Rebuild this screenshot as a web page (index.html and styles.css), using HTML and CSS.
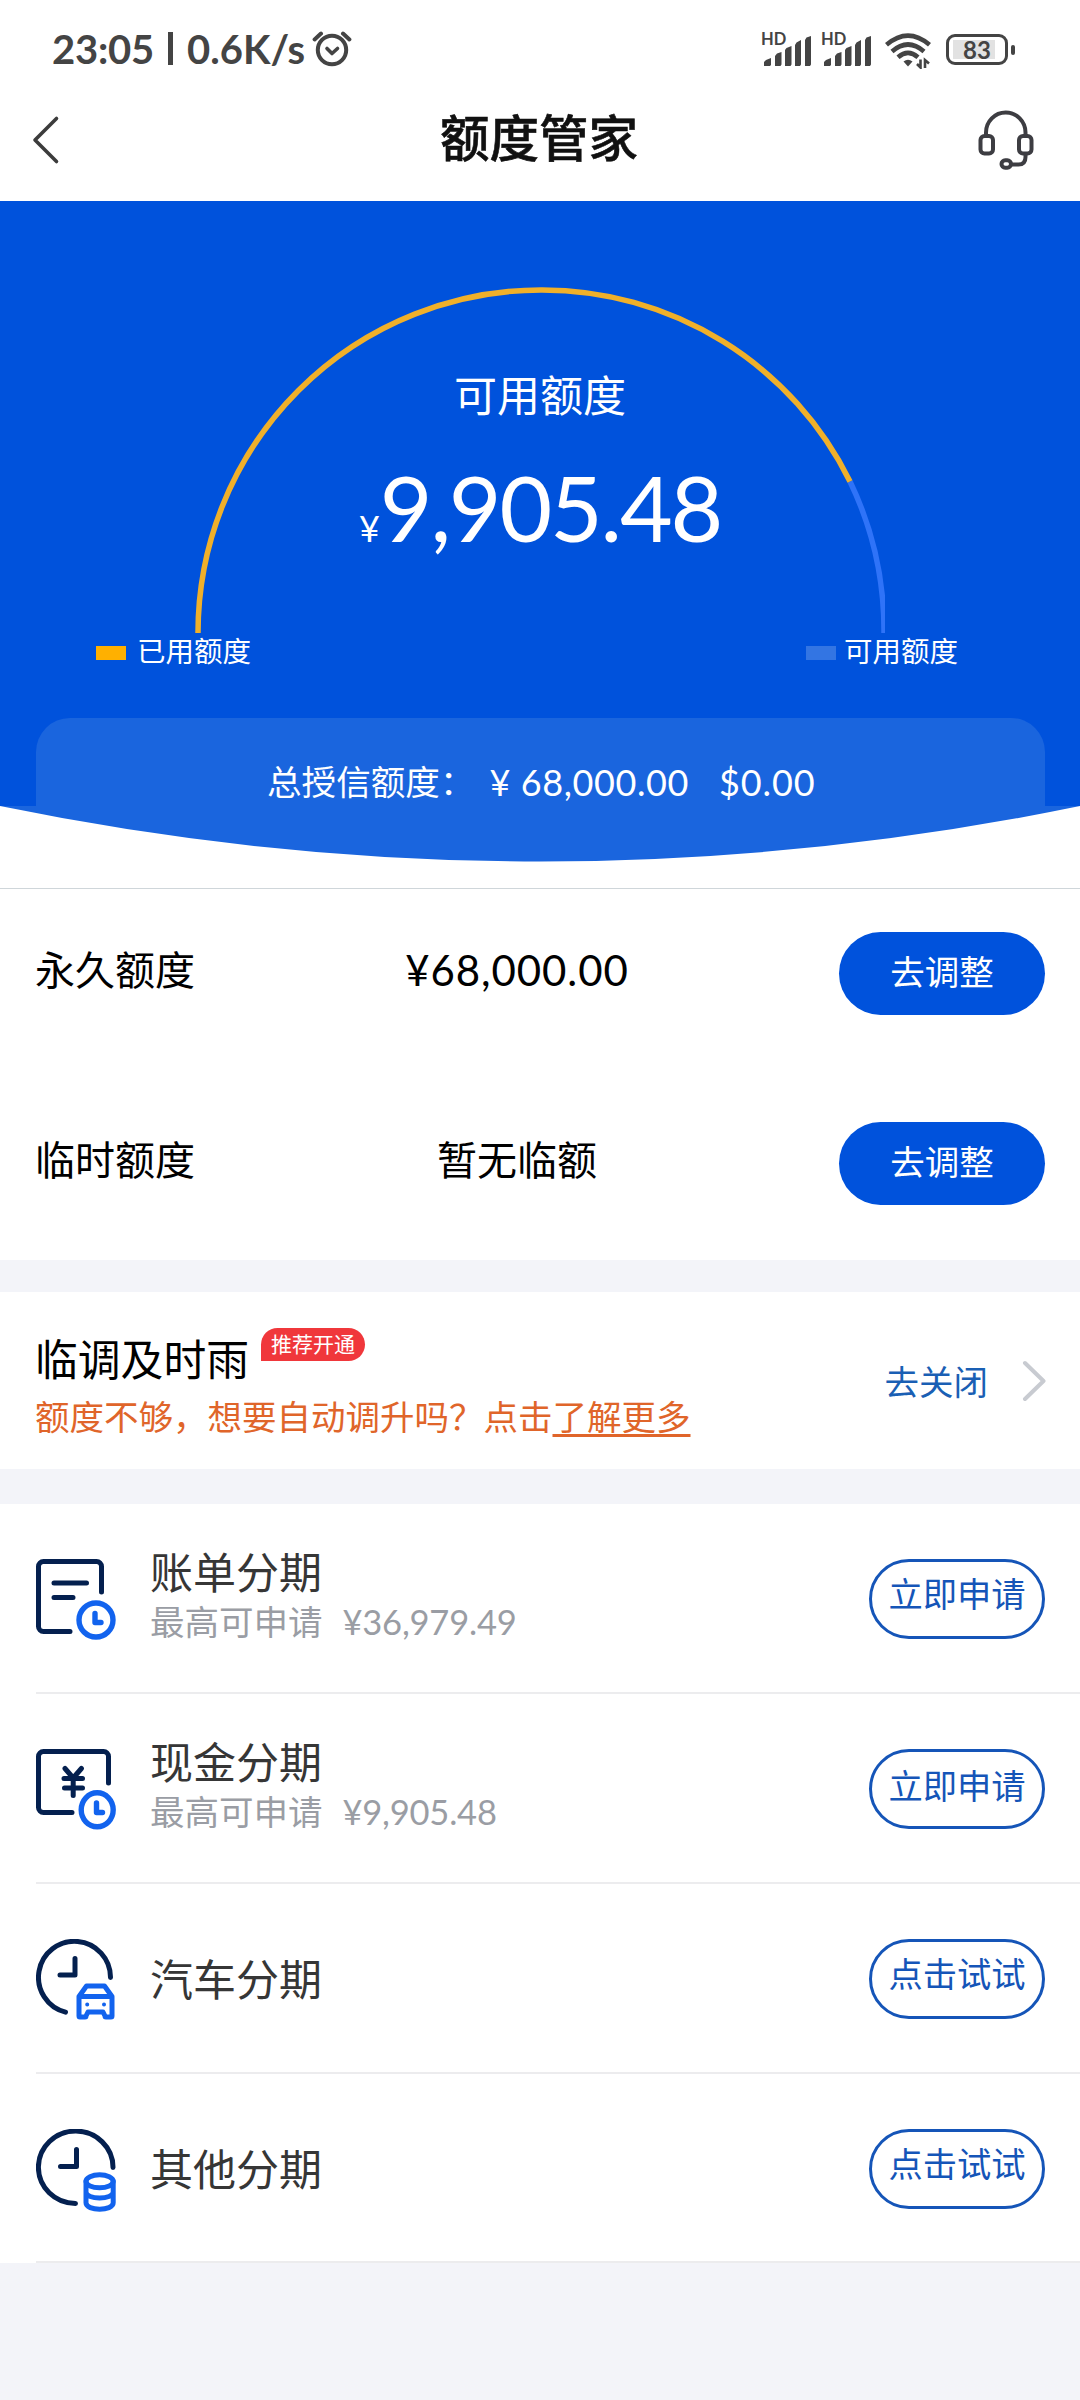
FILE: index.html
```html
<!DOCTYPE html>
<html lang="zh-CN">
<head>
<meta charset="utf-8">
<title>额度管家</title>
<link rel="stylesheet" href="styles.css">
</head>
<body>
<header class="statusbar">
  <span class="clock">23:05</span><span class="sep"></span><span class="speed">0.6K/s</span>
  <svg class="alarm" width="40" height="38" viewBox="0 0 40 38" fill="none" stroke="#444" stroke-linecap="round" stroke-linejoin="round">
    <circle cx="20" cy="20" r="14.2" stroke-width="4"/>
    <path d="M2.600 9.400 9 3.600M31 3.600l6.400 5.800" stroke-width="4"/>
    <path d="m15 18.500 5 5 5.500-5" stroke-width="3.600"/>
  </svg>
  <div class="indicators">
    <div class="sim"><span class="hd">HD</span>
      <svg width="50" height="34" viewBox="0 0 50 34" fill="#444"><path d="M2 33v-4l2-2 5-2v7l-1 1zM13 33V23l2-2.500 4.500-1.500v12.500l-1 1.500zM23 33V17l1.500-2 5-2v18.500l-1 1.500zM33 33V12l1.500-2.500L39 7v24.500L38 33zM43 33V7l1.500-2.500L49 3v28.500L48 33z"/></svg>
    </div>
    <div class="sim"><span class="hd">HD</span>
      <svg width="50" height="34" viewBox="0 0 50 34" fill="#444"><path d="M2 33v-4l2-2 5-2v7l-1 1zM13 33V23l2-2.500 4.500-1.500v12.500l-1 1.500zM23 33V17l1.500-2 5-2v18.500l-1 1.500zM33 33V12l1.500-2.500L39 7v24.500L38 33zM43 33V7l1.500-2.500L49 3v28.500L48 33z"/></svg>
    </div>
    <svg class="wifi" width="46" height="36" viewBox="0 0 46 36" fill="none" stroke="#444" stroke-width="4.600">
      <path d="M1.500 11.800Q23-6.500 44.500 11.800M7 18.500Q23 4.500 39 18.500M13 24.300Q23 15.500 33 24.300"/>
      <path d="M18.500 28.500Q23 25 27.500 28.500L23 33.500z" fill="#444" stroke="none"/>
      <path d="M35.500 26.500v8l-3.500-3.500M40 35v-8l4 3.500" stroke-width="2.600"/>
    </svg>
    <div class="battery"><span>83</span></div><i class="nub"></i>
  </div>
</header>
<nav class="navbar">
  <svg class="back" width="28" height="50" viewBox="0 0 28 50" fill="none" stroke="#3c3c3c" stroke-width="3.600" stroke-linecap="round" stroke-linejoin="round"><path d="M24.500 3.500 3 25l21.500 21.500"/></svg>
  <h1>额度管家</h1>
  <svg class="service" width="56" height="60" viewBox="0 0 56 60" fill="none" stroke="#3d3d42" stroke-width="4" stroke-linecap="round" stroke-linejoin="round">
    <path d="M8 25v-2.500a19.700 20 0 0 1 39.500 0V25"/>
    <rect x="2.500" y="26" width="12.500" height="17.500" rx="4"/>
    <rect x="41" y="26" width="12.500" height="17.500" rx="4"/>
    <path d="M47.500 44v3q0 7.500-7 7.500h-7"/>
    <rect x="23.500" y="50.300" width="9.500" height="7.400" rx="3.700"/>
  </svg>
</nav>

<section class="hero">
  <div class="gauge">
    <svg width="690" height="347" viewBox="0 0 690 347" fill="none" stroke-width="5.500">
      <path d="M655 195.500A344 344 0 0 1 689 347" stroke="#2f73f8"/>
      <path d="M3 347A343 343 0 0 1 346 4A343 343 0 0 1 655 195.500" stroke="#f0b02a"/>
    </svg>
    <div class="gauge-text">
      <div class="gauge-label">可用额度</div>
      <div class="amount"><small>¥</small><span>9,905.48</span></div>
    </div>
  </div>
  <div class="legend">
    <div class="key"><i class="swatch used"></i>已用额度</div>
    <div class="key free"><i class="swatch"></i>可用额度</div>
  </div>
  <div class="total"><span>总授信额度：</span><span class="cny">¥ 68,000.00</span><span class="usd">$0.00</span></div>
</section>
<svg class="curve" width="1080" height="56" viewBox="0 0 1080 56"><path d="M0 0Q540 111 1080 0z" fill="#1a65de"/></svg>

<section class="limits">
  <div class="limit"><span>永久额度</span><b class="num">¥68,000.00</b><button>去调整</button></div>
  <div class="limit"><span>临时额度</span><b>暂无临额</b><button>去调整</button></div>
</section>

<section class="auto">
  <div class="auto-info">
    <div class="auto-head"><h2>临调及时雨</h2><span class="badge">推荐开通</span></div>
    <p>额度不够，想要自动调升吗？点击<u>了解更多</u></p>
  </div>
  <a class="close">去关闭</a>
  <svg width="24" height="44" viewBox="0 0 24 44" fill="none" stroke="#c8cbd1" stroke-width="4" stroke-linecap="round" stroke-linejoin="round"><path d="m3 4 18.500 18L3 40"/></svg>
</section>

<section class="plans">
  <div class="plan">
    <svg class="icon" width="80" height="84" viewBox="0 0 80 84" fill="none" stroke="#04204f" stroke-width="5" stroke-linecap="round" stroke-linejoin="round">
      <path d="M65.500 33V7.500a5 5 0 0 0-5-5H7.500a5 5 0 0 0-5 5v60a5 5 0 0 0 5 5H34M18 24h32.500M18 38.500h19"/>
      <g stroke="#1263ee" stroke-width="5.400"><circle cx="60" cy="61" r="17"/><path d="M59 54.500V63.500h6"/></g>
    </svg>
    <div class="plan-text"><h3>账单分期</h3><p>最高可申请<span>¥36,979.49</span></p></div>
    <button class="ghost">立即申请</button>
  </div>
  <div class="plan">
    <svg class="icon" width="80" height="84" viewBox="0 0 80 84" fill="none" stroke="#04204f" stroke-width="5" stroke-linecap="round" stroke-linejoin="round">
      <path d="M72.500 34V7.500a5 5 0 0 0-5-5H7.500a5 5 0 0 0-5 5v51a5 5 0 0 0 5 5H36"/>
      <path d="m29 19.500 8.200 9.500 8.200-9.500M28 29.500h18.500M28.500 39h18M37.200 29.500v17"/>
      <g stroke="#1263ee" stroke-width="5.400"><ellipse cx="61.200" cy="60.800" rx="16" ry="17"/><path d="M60.500 54v9.500h6"/></g>
    </svg>
    <div class="plan-text"><h3>现金分期</h3><p>最高可申请<span>¥9,905.48</span></p></div>
    <button class="ghost low">立即申请</button>
  </div>
  <div class="plan">
    <svg class="icon" width="80" height="84" viewBox="0 0 80 84" fill="none" stroke="#04204f" stroke-width="5" stroke-linecap="round" stroke-linejoin="round">
      <path d="M74.500 38.500A36 36 0 1 0 29.500 73.200M39 19.500V36H24"/>
      <g stroke="#1263ee" stroke-width="5"><path d="m43 57.500 7.500-10.500h18L76 57.500V77q0 1-1 1h-5q-1 0-1-1l-2-4H52l-2 4q0 1-1 1h-5q-1 0-1-1zM43 57.500h33"/><path d="M51.200 65.500h.01M68 65.500h.01" stroke-width="4"/></g>
    </svg>
    <div class="plan-text solo"><h3>汽车分期</h3></div>
    <button class="ghost">点击试试</button>
  </div>
  <div class="plan">
    <svg class="icon" width="80" height="84" viewBox="0 0 80 84" fill="none" stroke="#04204f" stroke-width="5" stroke-linecap="round" stroke-linejoin="round">
      <path d="M77 38.500A37.300 36.200 0 1 0 39.500 74.500M40.500 20.500V37.500H24.500"/>
      <g stroke="#1263ee" stroke-width="5"><ellipse cx="63.600" cy="52.300" rx="13.600" ry="6.500"/><path d="M50 52.300v21.500c0 8.500 27.200 8.500 27.200 0V52.300M50 63c0 8 27.200 8 27.200 0"/></g>
    </svg>
    <div class="plan-text solo"><h3>其他分期</h3></div>
    <button class="ghost">点击试试</button>
  </div>
</section>
</body>
</html>
```
FILE: styles.css
```css
* { box-sizing: border-box; margin: 0; padding: 0; }
body {
  width: 1080px;
  height: 2400px;
  background: #f3f4f9;
  color: #000;
  font-family: Lato, "Noto Sans CJK SC", sans-serif;
  font-size: 40px;
  line-height: 1.2;
  overflow: hidden;
  white-space: nowrap;
}
svg { display: block; flex: none; }
h1, h2, h3, b { font-weight: 400; }
button { border: 0; font-family: inherit; display: block; }

.statusbar {
  height: 99px;
  padding: 0 65px 0 52px;
  display: flex;
  align-items: center;
  background: #fff;
  color: #444;
  font-size: 40px;
  font-weight: 700;
}
.statusbar > span { margin-top: -2px; }
.clock { letter-spacing: -.2px; }
.statusbar > .sep { width: 5px; height: 33px; margin: -2px 14px 0; background: #444; }
.alarm { margin: -1px 0 0 7px; }
.indicators { display: flex; align-items: center; margin-left: auto; }
.sim { position: relative; width: 60px; }
.hd { position: absolute; left: -1px; top: -4px; font-size: 16.500px; line-height: 20px; }
.wifi { margin: 2px 15px 0 3px; }
.battery {
  width: 62px; height: 31px;
  border: 3px solid #444; border-radius: 9px;
  background: linear-gradient(#e2e2e2, #e2e2e2) 4px 3px / 42px 19px no-repeat;
  font-size: 24px; line-height: 25px; text-align: center;
}
.nub { width: 4px; height: 10px; margin-left: 3px; border-radius: 2px; background: #444; }

.navbar {
  height: 102px;
  padding: 0 46px 20px 32px;
  display: flex;
  align-items: center;
  justify-content: space-between;
  background: #fff;
}
.back { margin-right: 28px; }
.navbar h1 { margin-left: 12px; margin-top: -2px; color: #111; font-size: 49.500px; font-weight: 500; -webkit-text-stroke: .6px #111; }

.hero { height: 605px; padding-top: 85px; background: #0052dc; color: #fff; }
.gauge { position: relative; width: 690px; margin: 0 0 0 195px; }
.gauge-text { position: absolute; left: 0; top: 85px; width: 690px; text-align: center; }
.gauge-label { font-size: 43px; line-height: 50px; }
.amount { display: flex; justify-content: center; align-items: baseline; line-height: 100px; margin-top: 36px; }
.amount small { font-size: 36px; }
.amount span { font-size: 91px; letter-spacing: -2.200px; }
.legend { display: flex; height: 84.500px; padding: 4px 122px 0 96px; font-size: 28.500px; line-height: 28px; justify-content: space-between; }
.key { display: flex; align-items: flex-start; height: 30px; gap: 11px; }
.free { gap: 8px; }
.swatch { width: 30px; height: 14px; margin-top: 9px; background: #3375e3; }
.used { background: #ffb000; }
.total {
  display: flex;
  height: 88.500px; margin: 0 35px 0 36px;
  padding: 42px 0 0 231px;
  border-radius: 34px 34px 0 0;
  background: #1a65de;
  font-size: 34.600px; line-height: 44px;
}
.cny { margin-left: 15px; font-size: 36px; letter-spacing: .6px; }
.usd { margin-left: 30px; font-size: 36px; letter-spacing: .9px; }
.curve { position: relative; z-index: 1; margin-bottom: 26px; background: #fff; }

.limits { height: 372px; padding-top: 43px; border-top: 1px solid #cfd6da; background: #fff; box-shadow: 0 -26px #fff; }
.limit { display: grid; grid-template-columns: 300px 364px 1fr; align-items: start; height: 190px; padding: 0 35px 0 35px; line-height: 76px; }
.limit b { text-align: center; }
.limit .num { font-size: 42px; letter-spacing: .9px; }
.limit button { justify-self: end; width: 206px; height: 83px; border-radius: 42px; background: #0052dc; color: #fff; font-size: 34.500px; line-height: 76px; padding-bottom: 4px; }

.auto { display: flex; align-items: center; height: 177px; margin: 32px 0 35px; padding: 0 34px 0 35px; background: #fff; }
.auto-info { flex: 1; padding-top: 11px; }
.auto-head { display: flex; }
.auto h2 { font-size: 42.800px; line-height: 64px; }
.badge { height: 33px; margin: 0 0 0 12px; padding: 0 10px; border-radius: 17px 17px 17px 0; background: #f0373b; color: #fff; font-size: 21px; line-height: 32px; }
.auto p { margin-top: -3px; color: #e0652a; font-size: 34.500px; line-height: 56px; }
.auto u { text-decoration-thickness: 2.500px; text-underline-offset: 4px; }
.close { margin: 3px 34px 0 0; color: #1a5fb4; font-size: 34.500px; }

.plans { background: #fff; height: 759px; }
.plan { display: flex; height: 190px; margin-left: 36px; padding: 55px 35px 0 0; border-bottom: 2px solid #ececee; }
.plan:last-child { height: 189px; }
.plan-text { flex: 1; margin: -7px 0 0 34px; height: 82px; display: flex; flex-direction: column; justify-content: center; }
.plan-text { height: 90px; }
.plan-text.solo { height: 96px; }
.plan h3 { color: #363636; font-size: 43px; line-height: 50px; }
.plan p { color: #9a9da4; font-size: 34.500px; line-height: 48px; }
.plan p span { margin-left: 20px; letter-spacing: -.2px; }
.ghost { width: 176px; height: 80px; border: 3px solid #1555b8; border-radius: 40px; background: none; color: #1555b8; font-size: 34.300px; line-height: 64px; padding-bottom: 10px; }
.low { line-height: 68px; padding-bottom: 6px; }
```
